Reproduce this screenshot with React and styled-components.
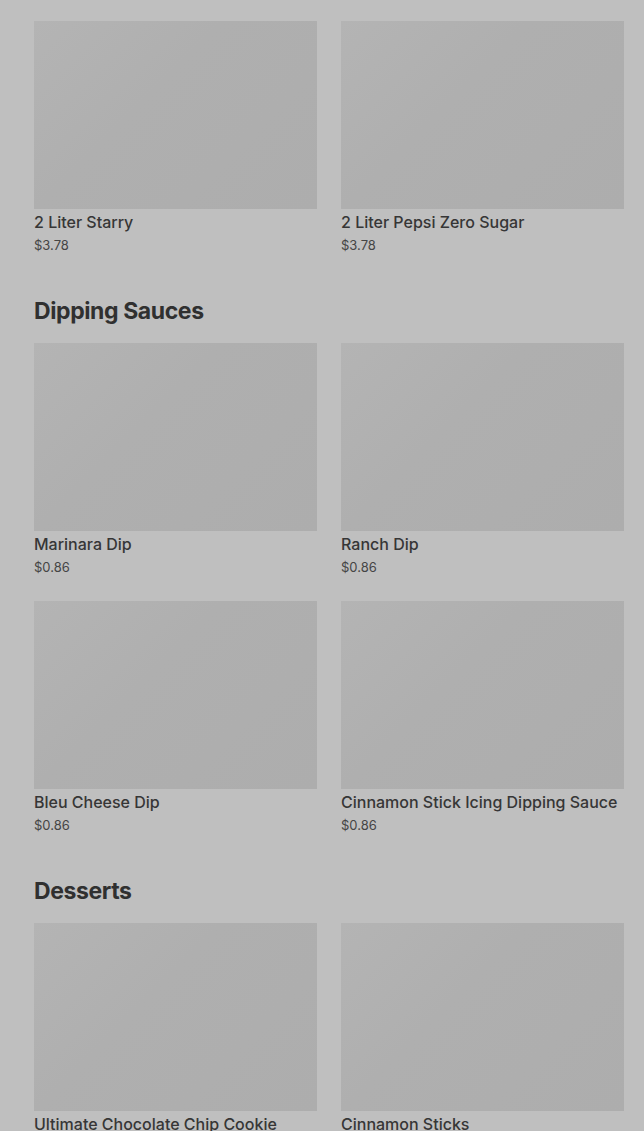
import React from 'react'
import styled, { createGlobalStyle } from 'styled-components'

const sections = [
  {
    title: null,
    items: [
      { name: '2 Liter Starry', price: '$3.78' },
      { name: '2 Liter Pepsi Zero Sugar', price: '$3.78' },
    ],
  },
  {
    title: 'Dipping Sauces',
    items: [
      { name: 'Marinara Dip', price: '$0.86' },
      { name: 'Ranch Dip', price: '$0.86' },
      { name: 'Bleu Cheese Dip', price: '$0.86' },
      { name: 'Cinnamon Stick Icing Dipping Sauce', price: '$0.86' },
    ],
  },
  {
    title: 'Desserts',
    items: [
      { name: 'Ultimate Chocolate Chip Cookie', price: '$2.99' },
      { name: 'Cinnamon Sticks', price: '$4.99' },
    ],
  },
]

const App = () => {
  return (
    <>
      <GlobalStyle />
      <Page>
        {sections.map((s, i) => (
          <Section key={i}>
            {s.title && <SectionHead>{s.title}</SectionHead>}
            <Grid>
              {s.items.map((it) => (
                <Card key={it.name}>
                  <Thumb />
                  <ItemName>{it.name}</ItemName>
                  <Price>{it.price}</Price>
                </Card>
              ))}
            </Grid>
          </Section>
        ))}
      </Page>
    </>
  )
}

export default App

const GlobalStyle = createGlobalStyle`
  html, body {
    margin: 0 ;
    padding: 0 ;
    background: #bfbfbf ;
    overflow: hidden ;
  }
  body {
    font-family: Inter, "Liberation Sans", sans-serif ;
  }
`

const Page = styled.div`
  display: flex ;
  flex-direction: column ;
  gap: 40px ;
  padding: 21px 20px 0 34px ;
  height: 1131px ;
  box-sizing: border-box ;
  overflow: hidden ;
`

const Section = styled.div`
  display: flex ;
  flex-direction: column ;
  gap: 16px ;
`

const SectionHead = styled.h2`
  margin: 0 ;
  font-size: 23px ;
  line-height: 32px ;
  font-weight: 700 ;
  letter-spacing: -0.4px ;
  color: #303030 ;
`

const Grid = styled.div`
  display: grid ;
  grid-template-columns: 283px 283px ;
  column-gap: 24px ;
  row-gap: 24px ;
`

const Card = styled.div`
  display: flex ;
  flex-direction: column ;
`

const Thumb = styled.div`
  height: 188px ;
  background: linear-gradient(135deg, #b4b4b4 0%, #afafaf 40%, #adadad 100%) ;
`

const ItemName = styled.div`
  margin-top: 2px ;
  font-size: 16px ;
  line-height: 22px ;
  font-weight: 500 ;
  color: #363636 ;
  white-space: nowrap ;
`

const Price = styled.div`
  margin-top: 2px ;
  font-size: 13px ;
  line-height: 20px ;
  color: #454545 ;
`
